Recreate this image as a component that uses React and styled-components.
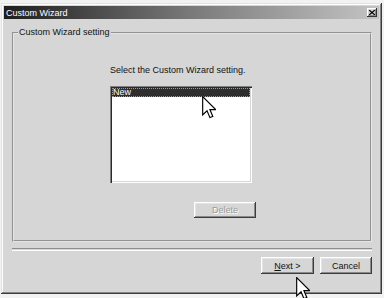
import React from 'react';
import styled, { createGlobalStyle } from 'styled-components';

const GlobalStyle = createGlobalStyle`
	html, body {
		margin: 0;
		padding: 0;
		background: #f2f2f2;
	}
	body {
		font-family: "Liberation Sans", Arial, sans-serif;
		font-size: 9px;
		color: #111;
	}
`;

const Page = styled.div`
	position: relative;
	width: 384px;
	height: 298px;
	padding: 3px 0 0 1px;
	box-sizing: border-box;
`;

const Window = styled.div`
	width: 381px;
	height: 291px;
	box-sizing: border-box;
	padding: 3px;
	background: #d6d6d6;
	display: flex;
	flex-direction: column;
	box-shadow: inset -1px -1px #3c3c3c, inset 1px 1px #e2e2e2, inset -2px -2px #858585,
		inset 2px 2px #fff;
`;

const TitleBar = styled.div`
	height: 13px;
	display: flex;
	align-items: center;
	justify-content: space-between;
	padding: 0 2px;
	background: linear-gradient(to right, #1e1e1e, #7a7a7a 50%, #c4c4c4);
	color: #fff;
	font-size: 9px;
`;

const CloseBtn = styled.div`
	width: 10px;
	height: 9px;
	box-sizing: border-box;
	background: #d6d6d6;
	box-shadow: inset -1px -1px #333, inset 1px 1px #fff, inset -2px -2px #888;
	display: flex;
	align-items: center;
	justify-content: center;
`;

const Body = styled.div`
	flex: 1;
	display: flex;
	flex-direction: column;
	padding: 0 7px 0 8px;
`;

const GroupBox = styled.fieldset`
	margin: 8px 0 0;
	padding: 0;
	height: 215px;
	box-sizing: border-box;
	border: 2px groove #e6e6e6;
	border-radius: 0;
`;

const Legend = styled.legend`
	margin-left: 4px;
	padding: 0 1px;
	line-height: 11px;
`;

const Content = styled.div`
	padding: 27px 0 0 96px;
	display: flex;
	flex-direction: column;
	align-items: flex-start;
`;

const Prompt = styled.div`
	line-height: 11px;
`;

const ListBox = styled.div`
	margin-top: 10px;
	width: 142px;
	height: 97px;
	box-sizing: border-box;
	padding: 2px;
	background: #fff;
	box-shadow: inset 1px 1px #808080, inset 2px 2px #2a2a2a, inset -1px -1px #fff,
		inset -2px -2px #d6d6d6;
`;

const ListItem = styled.div`
	height: 9px;
	line-height: 9px;
	padding-left: 1px;
	background: ${(p) => (p.selected ? '#2e2e2e' : 'transparent')};
	color: ${(p) => (p.selected ? '#fff' : '#111')};
	outline: ${(p) => (p.selected ? '1px dotted #9a9a9a' : 'none')};
	outline-offset: -1px;
`;

const Button = styled.div`
	height: 17px;
	box-sizing: border-box;
	display: flex;
	align-items: center;
	justify-content: center;
	background: #d6d6d6;
	box-shadow: inset -1px -1px #3c3c3c, inset 1px 1px #fff, inset -2px -2px #8a8a8a,
		inset 2px 2px #e4e4e4;
	width: ${(p) => p.w}px;
	color: ${(p) => (p.disabled ? '#9a9a9a' : '#111')};
	text-shadow: ${(p) => (p.disabled ? '1px 1px #fff' : 'none')};
`;

const DeleteBtn = styled(Button)`
	margin: 19px 0 0 84px;
	height: 16px;
`;

const Separator = styled.div`
	margin-top: 6px;
	height: 1px;
	border-top: 1px solid #8e8e8e;
	border-bottom: 1px solid #fff;
`;

const Footer = styled.div`
	margin-top: 6px;
	display: flex;
	justify-content: flex-end;
	gap: 6px;
`;

const Hotkey = styled.span`
	text-decoration: underline;
`;

const Cursor = styled.svg`
	position: absolute;
	left: ${(p) => p.x}px;
	top: ${(p) => p.y}px;
	width: 14px;
	height: 23px;
	pointer-events: none;
`;

const Arrow = ({ x, y }) => (
	<Cursor x={x} y={y} viewBox="0 0 12 20">
		<path
			d="M0.5 0.5 L0.5 16.5 L4.3 12.8 L6.8 18.8 L9.3 17.8 L6.8 11.8 L11.8 11.8 Z"
			fill="#fff"
			stroke="#000"
			strokeWidth="1"
			strokeLinejoin="miter"
		/>
	</Cursor>
);

const App = () => {
	return (
		<Page>
			<GlobalStyle />
			<Window>
				<TitleBar>
					<span>Custom Wizard</span>
					<CloseBtn>
						<svg width="6" height="5" viewBox="0 0 6 5">
							<path d="M0 0 L6 5 M6 0 L0 5" stroke="#000" strokeWidth="1.3" />
						</svg>
					</CloseBtn>
				</TitleBar>
				<Body>
					<GroupBox>
						<Legend>Custom Wizard setting</Legend>
						<Content>
							<Prompt>Select the Custom Wizard setting.</Prompt>
							<ListBox>
								<ListItem selected>New</ListItem>
							</ListBox>
							<DeleteBtn w={62} disabled>
								Delete
							</DeleteBtn>
						</Content>
					</GroupBox>
					<Separator />
					<Footer>
						<Button w={53}>
							<span>
								<Hotkey>N</Hotkey>ext &gt;
							</span>
						</Button>
						<Button w={52}>Cancel</Button>
					</Footer>
				</Body>
			</Window>
			<Arrow x={202} y={96} />
			<Arrow x={296} y={277} />
		</Page>
	);
};

export default App;
